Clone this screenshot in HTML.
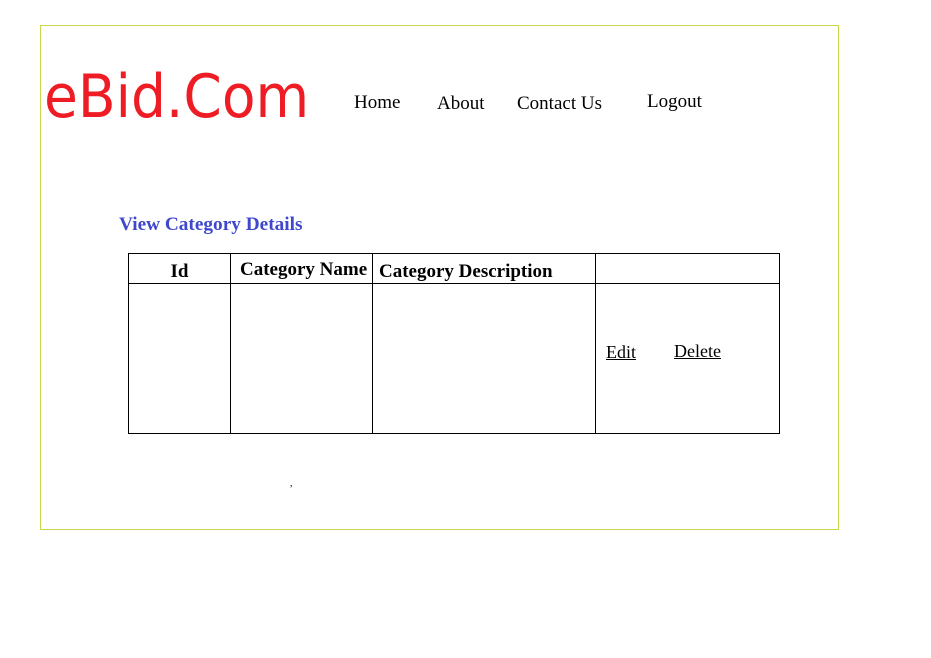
<!DOCTYPE html>
<html><head><meta charset="utf-8"><style>
body{margin:0;width:931px;height:658px;background:#fff;position:relative;font-family:"Liberation Serif",serif;overflow:hidden}
.box{position:absolute;left:40px;top:25px;width:797px;height:503px;border:1px solid #c8d84a}
.a{position:absolute;white-space:nowrap}
.logo{left:44px;top:62px;color:#ee1c24;font-family:"DejaVu Sans Condensed","DejaVu Sans",sans-serif;font-size:60px;line-height:70px;transform:scaleX(1.02);transform-origin:left}
.nav{font-size:19px;color:#000;top:92px}
table{position:absolute;left:128px;top:253px;border-collapse:collapse}
td{border:1px solid #000;padding:0;font-size:19px;font-weight:bold;vertical-align:top}
a{color:#000}
</style></head><body>
<div class="box"></div>
<div class="a logo">eBid.Com</div>
<div class="a nav" style="left:354px;top:92px">Home</div>
<div class="a nav" style="left:437px;top:93px">About</div>
<div class="a nav" style="left:517px;top:93px">Contact Us</div>
<div class="a nav" style="left:647px;top:91px">Logout</div>
<div class="a" style="left:119px;top:214px;color:#3f48cc;font-weight:bold;font-size:19.3px">View Category Details</div>
<table>
<tr style="height:29px"><td style="width:102px;text-align:center;padding-top:7px;box-sizing:border-box">Id</td><td style="width:142px;padding-left:9px;padding-top:5px;box-sizing:border-box">Category Name</td><td style="width:223px;padding-left:6px;padding-top:7px;box-sizing:border-box">Category Description</td><td style="width:183px"></td></tr>
<tr style="height:150px"><td></td><td></td><td></td><td style="vertical-align:middle;font-weight:normal;font-size:18px;padding-left:10px"><a href="#" style="position:relative;top:-6px">Edit</a><a href="#" style="margin-left:38px;position:relative;top:-7px">Delete</a></td></tr>
</table>
<div class="a" style="left:290px;top:478px;font-size:10px">,</div>
</body></html>
